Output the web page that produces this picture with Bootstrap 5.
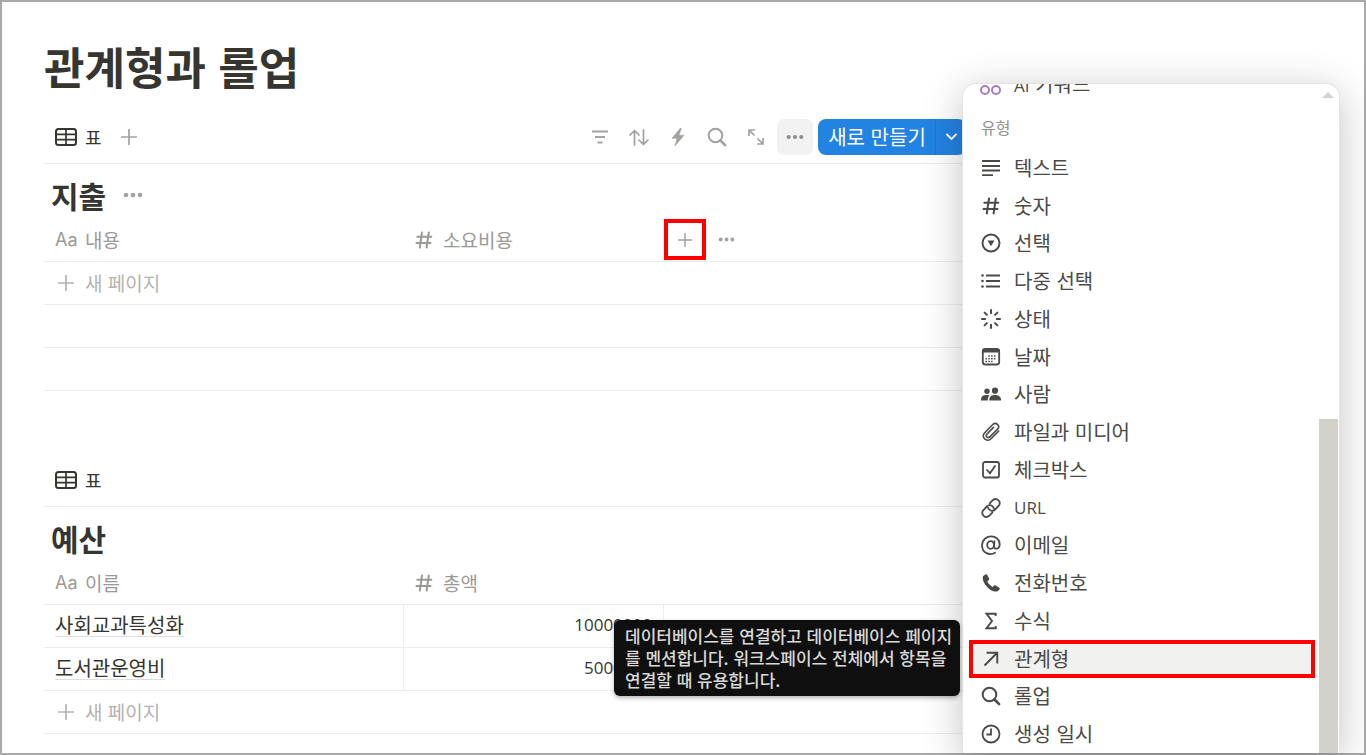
<!DOCTYPE html>
<html lang="ko">
<head>
<meta charset="utf-8">
<meta name="viewport" content="width=device-width, initial-scale=1">
<title>관계형과 롤업</title>
<link href="https://cdn.jsdelivr.net/npm/bootstrap@5.3.0/dist/css/bootstrap.min.css" rel="stylesheet">
<style>
:root{--ink:#37352f;--muted:#a3a29f;--faint:#b4b3b0;--rule:#ededec;--mark-red:#ff0000}
body{font-family:"Noto Sans CJK KR",sans-serif;font-size:20px;line-height:28px;color:var(--ink);background:#fff}
.page-frame{border:2px solid #a9a9a9;min-height:100vh;overflow:hidden;padding:31px 398px 0 42px}
.page-title{font-size:44px;line-height:66px;font-weight:700;margin:0 0 12px}
.db{margin-bottom:63px}
.db:last-child{margin-bottom:0}
.view-bar{height:53px;border-bottom:1px solid var(--rule)}
.view-tab{padding:0 11px;gap:8px;font-size:18px;border:0;background:none;color:var(--ink)}
.plain-btn{border:0;background:none;padding:0;color:var(--muted);display:inline-flex;align-items:center;justify-content:center}
.tools-right{gap:5px}
.tool-set{gap:3px}
.tool{width:36px;height:36px;border-radius:7px}
.tool.on{background:#f2f2f2;color:#8f8e8b}
.btn-new{background:#2383e2;color:#fff;border:0;height:36px;padding:0;font-size:20px;line-height:36px;border-radius:8px}
.btn-new:hover{background:#1b76d0;color:#fff}
.btn-new.main{width:118px}
.btn-new.more{width:31px;border-left:1px solid #1f76cc}
.db-head{padding:8px 7px 0;gap:17px;height:54px}
.db-head h2{font-size:30px;line-height:44px;font-weight:700;margin:0}
.grid-table{table-layout:fixed;width:100%;margin:0;border-collapse:separate;border-spacing:0}
.grid-table .c-name{width:360px}
.grid-table .c-num{width:260px}
.grid-table th{height:44px;font-size:19px;font-weight:400;color:#9b9a97;padding:0 11px;border-bottom:1px solid var(--rule)}
.grid-table td{height:43px;padding:0 11px;border-bottom:1px solid var(--rule)}
.grid-table th.tools{padding:0}
.col-label{gap:8px}
.num-label{gap:10px}
.aa{font-family:Inter,sans-serif;font-size:18px;width:22px}
.grid-table td.ruled{border-right:1px solid var(--rule);padding-bottom:3px}
.digits{font-family:"Open Sans",sans-serif;font-size:17px;text-align:right}
.row-link{color:var(--ink);text-decoration:none;border-bottom:1px solid #dededc;display:inline-block;line-height:22px}
.new-row{color:var(--faint);gap:8px;font-size:19px}
.new-row svg{width:22px}
.add-prop{width:42px;height:41px;border:4px solid var(--mark-red)}
.type-menu{position:absolute;top:83px;right:26px;bottom:2px;width:378px;background:#fff;border:1px solid #e4e4e3;border-bottom:0;border-radius:14px 14px 0 0;box-shadow:0 8px 40px rgba(0,0,0,.24);overflow:hidden;z-index:5;color:#4b4a46}
.menu-top{height:65px}
.menu-item{gap:13px;padding:0 12px;border:0;background:none;color:inherit;text-align:left;width:100%;line-height:24px}
.menu-list{margin:0 24px 0 6px}
.menu-list .menu-item{flex:1 1 0}
.menu-item svg{flex:none}
.menu-item.picked{background:#f1f1f0;box-shadow:inset 0 0 0 4px var(--mark-red)}
.menu-caption{font-size:16px;color:#91908d;height:51px;padding:15px 18px 0}
.latin{font-family:"Open Sans",sans-serif;font-size:17px}
.thumb{position:absolute;right:1px;top:335px;bottom:0;width:19px;background:#d3d1cb}
.thumb-up{position:absolute;right:5px;top:8px;border:6px solid transparent;border-top:0;border-bottom-color:#d3d1cb}
.tip{position:absolute;right:406px;top:620px;width:346px;padding:5px 6px 5px 11px;border-radius:6px;background:#0f0f0f;color:#d9d9d8;font-size:17px;line-height:22px;font-weight:500;z-index:6;box-shadow:0 2px 4px rgba(0,0,0,.3)}
</style>
</head>
<body>
<svg class="d-none" xmlns="http://www.w3.org/2000/svg">
<symbol id="i-table" viewBox="0 0 22 18"><rect x="1" y="1" width="20" height="16" rx="2.5" fill="none" stroke="currentColor" stroke-width="2"/><path d="M1 6.300h20M1 11.700h20M11 1v16" stroke="currentColor" stroke-width="1.700"/></symbol>
<symbol id="i-plus" viewBox="0 0 16 16"><path d="M8 0v16M0 8h16" stroke="currentColor" stroke-width="1.700"/></symbol>
<symbol id="i-dots" viewBox="0 0 20 6"><g fill="currentColor"><circle cx="3" cy="3" r="2.300"/><circle cx="10" cy="3" r="2.300"/><circle cx="17" cy="3" r="2.300"/></g></symbol>
<symbol id="i-hash" viewBox="0 0 18 18"><path d="M7 1.500 4.800 16.500M13.800 1.500l-2.200 15M2.300 5.800h14M1.500 12h14" fill="none" stroke="currentColor" stroke-width="2" stroke-linecap="round"/></symbol>
<symbol id="i-search" viewBox="0 0 20 20"><circle cx="8.500" cy="8.500" r="6.800" fill="none" stroke="currentColor" stroke-width="2"/><path d="m13.500 13.500 4.600 4.600" stroke="currentColor" stroke-width="2.600" stroke-linecap="round"/></symbol>
</svg>

<main class="page-frame position-relative">
  <h1 class="page-title">관계형과 롤업</h1>

  <section class="db">
    <div class="view-bar d-flex align-items-center">
      <button class="view-tab d-flex align-items-center" type="button"><svg width="22" height="18"><use href="#i-table"/></svg>표</button>
      <button class="plain-btn ms-2" type="button" aria-label="보기 추가"><svg width="16" height="16"><use href="#i-plus"/></svg></button>
      <div class="tools-right d-flex align-items-center ms-auto">
        <div class="tool-set d-flex">
          <button class="plain-btn tool" type="button" aria-label="필터"><svg width="16" height="14" viewBox="0 0 16 14"><path d="M0 1.500h16M3 7h10M5.500 12.500h5" stroke="currentColor" stroke-width="1.900"/></svg></button>
          <button class="plain-btn tool" type="button" aria-label="정렬"><svg width="20" height="17" viewBox="0 0 20 17" fill="none" stroke="currentColor" stroke-width="1.700" stroke-linecap="round" stroke-linejoin="round"><path d="M5.500 16V1.500M1 6l4.500-4.500L10 6M14.500 1v14.500M10 11l4.500 4.500L19 11"/></svg></button>
          <button class="plain-btn tool" type="button" aria-label="자동화"><svg width="14" height="20" viewBox="0 0 14 20"><path d="M9.500 1 1 11.300h5L4 19l9-10.800H8L10.300 1.500z" fill="currentColor" stroke="currentColor" stroke-width=".6"/></svg></button>
          <button class="plain-btn tool" type="button" aria-label="검색"><svg width="20" height="20"><use href="#i-search"/></svg></button>
          <button class="plain-btn tool" type="button" aria-label="전체 화면"><svg width="16" height="16" viewBox="0 0 16 16" fill="none" stroke="currentColor" stroke-width="1.700"><path d="M1 7V1h6M1.300 1.300 6.500 6.500M15 9v6H9M14.700 14.700 9.500 9.500"/></svg></button>
          <button class="plain-btn tool on" type="button" aria-label="더 보기"><svg width="18" height="6"><use href="#i-dots"/></svg></button>
        </div>
        <div class="btn-group">
          <button class="btn btn-new main" type="button">새로 만들기</button>
          <button class="btn btn-new more" type="button" aria-label="옵션"><svg class="d-block mx-auto" width="11" height="8" viewBox="0 0 11 8"><path d="m1 1.500 4.500 4.500L10 1.500" fill="none" stroke="#fff" stroke-width="1.800" stroke-linecap="round"/></svg></button>
        </div>
      </div>
    </div>
    <div class="db-head d-flex align-items-center">
      <h2>지출</h2>
      <button class="plain-btn" type="button" aria-label="메뉴"><svg width="20" height="6"><use href="#i-dots"/></svg></button>
    </div>
    <table class="grid-table">
      <colgroup><col class="c-name"><col class="c-num"><col></colgroup>
      <thead><tr>
        <th scope="col"><div class="col-label d-flex align-items-center"><span class="aa">Aa</span>내용</div></th>
        <th scope="col"><div class="num-label d-flex align-items-center"><svg width="18" height="18"><use href="#i-hash"/></svg>소요비용</div></th>
        <th scope="col" class="tools"><div class="d-flex align-items-center"><button class="plain-btn add-prop" type="button" aria-label="속성 추가"><svg width="14" height="14"><use href="#i-plus"/></svg></button><button class="plain-btn ms-2 px-1" type="button" aria-label="속성 메뉴"><svg width="17" height="5"><use href="#i-dots"/></svg></button></div></th>
      </tr></thead>
      <tbody>
        <tr><td colspan="3"><button class="plain-btn new-row" type="button"><svg height="16"><use href="#i-plus"/></svg>새 페이지</button></td></tr>
        <tr><td colspan="3"></td></tr>
        <tr><td colspan="3"></td></tr>
      </tbody>
    </table>
  </section>

  <section class="db">
    <div class="view-bar d-flex align-items-center">
      <button class="view-tab d-flex align-items-center" type="button"><svg width="22" height="18"><use href="#i-table"/></svg>표</button>
    </div>
    <div class="db-head d-flex align-items-center"><h2>예산</h2></div>
    <table class="grid-table">
      <colgroup><col class="c-name"><col class="c-num"><col></colgroup>
      <thead><tr>
        <th scope="col"><div class="col-label d-flex align-items-center"><span class="aa">Aa</span>이름</div></th>
        <th scope="col"><div class="num-label d-flex align-items-center"><svg width="18" height="18"><use href="#i-hash"/></svg>총액</div></th>
        <th></th>
      </tr></thead>
      <tbody>
        <tr><td class="ruled"><a class="row-link" href="#">사회교과특성화</a></td><td class="ruled digits">10000000</td><td></td></tr>
        <tr><td class="ruled"><a class="row-link" href="#">도서관운영비</a></td><td class="ruled digits">5000000</td><td></td></tr>
        <tr><td colspan="3"><button class="plain-btn new-row" type="button"><svg height="16"><use href="#i-plus"/></svg>새 페이지</button></td></tr>
      </tbody>
    </table>
  </section>
</main>

<div class="tip" role="tooltip">데이터베이스를 연결하고 데이터베이스 페이지를 멘션합니다. 워크스페이스 전체에서 항목을 연결할 때 유용합니다.</div>

<aside class="type-menu d-flex flex-column" aria-label="속성 유형">
  <div class="menu-top d-flex flex-column justify-content-end flex-shrink-0">
    <button class="menu-item d-flex align-items-center flex-shrink-0 ps-3" type="button"><svg width="22" height="22" viewBox="0 0 22 22" fill="none" stroke="#a57bc8" stroke-width="2"><circle cx="6" cy="5" r="4"/><circle cx="17" cy="5" r="4"/><circle cx="6" cy="16" r="4"/><circle cx="17" cy="16" r="4"/></svg><span><span class="latin">AI</span> 키워드</span></button>
    <div class="menu-caption flex-shrink-0">유형</div>
  </div>
  <div class="menu-list d-flex flex-column flex-grow-1">
    <button class="menu-item d-flex align-items-center" type="button"><svg width="20" height="20" viewBox="0 0 20 20"><path d="M1 3h18M1 8h18M1 12.500h18M1 17.200h11" stroke="currentColor" stroke-width="1.800"/></svg>텍스트</button>
    <button class="menu-item d-flex align-items-center" type="button"><svg width="20" height="18"><use href="#i-hash"/></svg>숫자</button>
    <button class="menu-item d-flex align-items-center" type="button"><svg width="20" height="20" viewBox="0 0 20 20"><circle cx="10" cy="10" r="8.500" fill="none" stroke="currentColor" stroke-width="1.900"/><path d="M6.500 7.500h7L10 13.200z" fill="currentColor"/></svg>선택</button>
    <button class="menu-item d-flex align-items-center" type="button"><svg width="20" height="20" viewBox="0 0 20 20"><path d="M5 4.500h14M5 10h14M5 15.500h14" stroke="currentColor" stroke-width="1.800"/><g fill="currentColor"><circle cx="1.500" cy="4.500" r="1.300"/><circle cx="1.500" cy="10" r="1.300"/><circle cx="1.500" cy="15.500" r="1.300"/></g></svg>다중 선택</button>
    <button class="menu-item d-flex align-items-center" type="button"><svg width="20" height="20" viewBox="0 0 20 20"><path d="M10 1v3.200M10 15.800V19M1 10h3.200M15.800 10H19M3.600 3.600l2.300 2.300M14.100 14.100l2.300 2.300M16.400 3.600l-2.300 2.300M5.900 14.100l-2.300 2.300" stroke="currentColor" stroke-width="2" stroke-linecap="round"/></svg>상태</button>
    <button class="menu-item d-flex align-items-center" type="button"><svg width="20" height="20" viewBox="0 0 20 20"><rect x="1.800" y="2" width="16.400" height="15.500" rx="2.500" fill="none" stroke="currentColor" stroke-width="1.800"/><path d="M1.500 3.800h17" stroke="currentColor" stroke-width="3.400"/><path d="M7.300 9h8M4.500 11.800h11M4.500 14.500h8" stroke="currentColor" stroke-width="1.500" stroke-dasharray="1.500 1.300"/></svg>날짜</button>
    <button class="menu-item d-flex align-items-center" type="button"><svg width="20" height="20" viewBox="0 0 20 20" fill="currentColor"><circle cx="14" cy="6.700" r="3.100"/><circle cx="6" cy="7.200" r="2.700"/><path d="M8.300 16.500v-1.200c0-3 2.800-4.400 5.700-4.400s6 1.400 6 4.400v1.200zM0 16.500v-1.200c0-3.500 3.500-5 8.600-3.900-1.400 1.100-1.900 2.400-1.800 5.100z"/></svg>사람</button>
    <button class="menu-item d-flex align-items-center" type="button"><svg width="20" height="20" viewBox="0 0 20 20" fill="none" stroke="currentColor" stroke-width="1.600" stroke-linecap="round"><path d="m17.700 9-7.600 7.700c-3.800 3.900-10.300-1.200-6.800-5.500l8.500-8.700c3-2.900 7.800 1.100 5 4.400l-7.900 8c-1.800 1.900-4.700-.5-3.100-2.600l6.700-6.900"/></svg>파일과 미디어</button>
    <button class="menu-item d-flex align-items-center" type="button"><svg width="20" height="20" viewBox="0 0 20 20" fill="none" stroke="currentColor" stroke-width="1.800"><rect x="2" y="2" width="16" height="15.500" rx="2"/><path d="m6 10 3 3.200 5-7.200" stroke-linecap="round"/></svg>체크박스</button>
    <button class="menu-item d-flex align-items-center latin" type="button"><svg width="20" height="20" viewBox="0 0 20 20" fill="none" stroke="currentColor" stroke-width="1.800" stroke-linecap="round"><path d="M8.700 5.300 11.800 2.200c3.800-3.300 8.900 1.500 6 5.500l-3.700 3.800c-2.400 2.300-6.100 1.300-6.900-1.700M11.300 14.700l-3.100 3.100c-3.800 3.300-8.900-1.500-6-5.500l3.700-3.800c2.400-2.300 6.100-1.300 6.900 1.700"/></svg>URL</button>
    <button class="menu-item d-flex align-items-center" type="button"><svg width="20" height="20" viewBox="0 0 20 20" fill="none" stroke="currentColor" stroke-width="1.800" stroke-linecap="round"><ellipse cx="9.600" cy="10" rx="3.400" ry="3.900"/><path d="M13.400 6.200 13 12c0 2.500 5.700 2.500 5.700-2.800 0-10-16.800-11-17.600.8-.3 8.500 7.700 10.700 12.900 7.800"/></svg>이메일</button>
    <button class="menu-item d-flex align-items-center" type="button"><svg width="20" height="20" viewBox="0 0 20 20"><path d="M2.200 2.900 4.500 1.500c.8-.4 1.500-.1 1.900.7l1.700 3.300c.3.700.1 1.300-.5 1.800L6.300 8.500c1.200 2.300 2.900 4.100 5.300 5.400l1.400-1.200c.5-.5 1.100-.5 1.700-.2l3.300 2c.8.5 1 1.200.4 1.900l-1.500 1.600C10.500 21.500-.7 8.500 2.200 2.900z" fill="currentColor"/></svg>전화번호</button>
    <button class="menu-item d-flex align-items-center" type="button"><svg width="20" height="20" viewBox="0 0 20 20"><path d="M14.700 5V2.800H5.500L11 10l-5.500 7.200h9.200V15" fill="none" stroke="currentColor" stroke-width="1.900"/></svg>수식</button>
    <button class="menu-item picked d-flex align-items-center" type="button"><svg width="20" height="20" viewBox="0 0 20 20"><path d="M3.500 16.500 16 4M5.500 3.700H16.300V14.500" fill="none" stroke="currentColor" stroke-width="1.900"/></svg>관계형</button>
    <button class="menu-item d-flex align-items-center" type="button"><svg width="20" height="20"><use href="#i-search"/></svg>롤업</button>
    <button class="menu-item d-flex align-items-center" type="button"><svg width="20" height="20" viewBox="0 0 20 20" fill="none" stroke="currentColor" stroke-width="1.800"><circle cx="10" cy="10" r="8.500"/><path d="M10 4.500V10.500H5.500"/></svg>생성 일시</button>
  </div>
  <span class="thumb-up"></span>
  <span class="thumb"></span>
</aside>
<script src="https://cdn.jsdelivr.net/npm/bootstrap@5.3.0/dist/js/bootstrap.bundle.min.js"></script>
</body>
</html>
